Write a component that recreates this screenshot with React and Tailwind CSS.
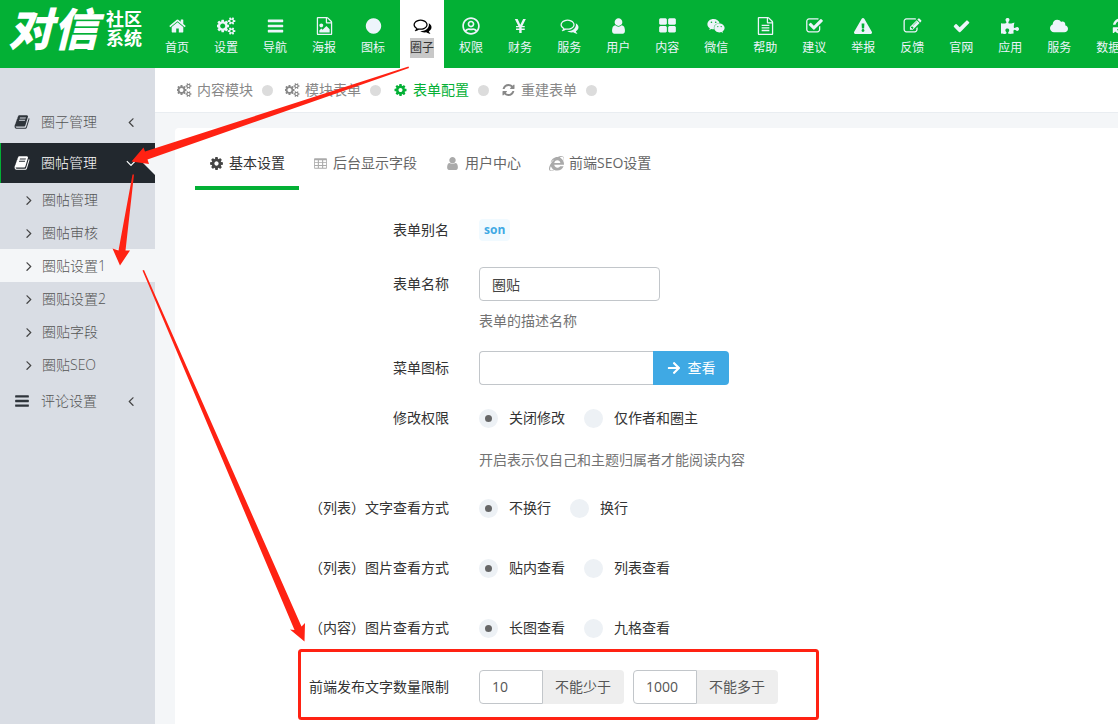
import React, { useState } from "react";
import {
  FaArrowRight,
  FaCloud,
  FaExclamationTriangle,
  FaInternetExplorer,
  FaPuzzlePiece,
  FaRegUserCircle,
  FaWeixin,
} from "react-icons/fa";

const PATHS = {
  home: "M1472 992v480q0 26-19 45t-45 19h-384v-384h-256v384h-384q-26 0-45-19t-19-45v-480q0-1 .5-3t.5-3l575-474 575 474q1 2 1 6zm223-69l-62 74q-8 9-21 11h-3q-13 0-21-7l-692-577-692 577q-12 8-24 7-13-2-21-11l-62-74q-8-10-7-23.5t11-21.5l719-599q32-26 76-26t76 26l244 204v-195q0-14 9-23t23-9h192q14 0 23 9t9 23v408l219 182q10 8 11 21.5t-7 23.5z",
  cog: "M1152 896q0-106-75-181t-181-75-181 75-75 181 75 181 181 75 181-75 75-181zm512-109v222q0 12-8 23t-20 13l-185 28q-19 54-39 91 35 50 107 138 10 12 10 25t-9 23q-27 37-99 108t-94 71q-12 0-26-9l-138-108q-44 23-91 38-16 136-29 186-7 28-36 28h-222q-14 0-24.5-8.5t-11.5-21.5l-28-184q-49-16-90-37l-141 107q-10 9-25 9-14 0-25-11-126-114-165-168-7-10-7-23 0-12 8-23 15-21 51-66.5t54-70.5q-27-50-41-99l-183-27q-13-2-21-12.5t-8-23.5v-222q0-12 8-23t19-13l186-28q14-46 39-92-40-57-107-138-10-12-10-24 0-10 9-23 26-36 98.5-107.5t94.5-71.5q13 0 26 10l138 107q44-23 91-38 16-136 29-186 7-28 36-28h222q14 0 24.5 8.5t11.5 21.5l28 184q49 16 90 37l142-107q9-9 24-9 13 0 25 10 129 119 165 170 7 8 7 22 0 12-8 23-15 21-51 66.5t-54 70.5q26 50 41 98l183 28q13 2 21 12.5t8 23.5z",
  cogs: "M832 896q0-106-75-181t-181-75-181 75-75 181 75 181 181 75 181-75 75-181zm768 512q0-52-38-90t-90-38-90 38-38 90q0 53 37.5 90.5t90.5 37.5 90.5-37.5 37.5-90.5zm0-1024q0-52-38-90t-90-38-90 38-38 90q0 53 37.5 90.5t90.5 37.5 90.5-37.5 37.5-90.5zm-384 421v185q0 10-7 19.5t-16 10.5l-155 24q-11 35-32 76 34 48 90 115 7 11 7 20 0 12-7 19-23 30-82.5 89.5t-78.5 59.5q-11 0-21-7l-115-90q-37 19-77 31-11 108-23 155-7 24-30 24h-186q-11 0-20-7.5t-10-17.5l-23-153q-34-10-75-31l-118 89q-7 7-20 7-11 0-21-8-144-133-144-160 0-9 7-19 10-14 41-53t47-61q-23-44-35-82l-152-24q-10-1-17-9.5t-7-19.5v-185q0-10 7-19.5t16-10.5l155-24q11-35 32-76-34-48-90-115-7-11-7-20 0-12 7-20 22-30 82-89t79-59q11 0 21 7l115 90q34-18 77-32 11-108 23-154 7-24 30-24h186q11 0 20 7.5t10 17.5l23 153q34 10 75 31l118-89q8-7 20-7 11 0 21 8 144 133 144 160 0 8-7 19-12 16-42 54t-45 60q23 48 34 82l152 23q10 2 17 10.5t7 19.5zm640 533v140q0 16-149 31-12 27-30 52 51 113 51 138 0 4-4 7-122 71-124 71-8 0-46-47t-52-68q-20 2-30 2t-30-2q-14 21-52 68t-46 47q-2 0-124-71-4-3-4-7 0-25 51-138-18-25-30-52-149-15-149-31v-140q0-16 149-31 13-29 30-52-51-113-51-138 0-4 4-7 4-2 35-20t59-34 30-16q8 0 46 46.5t52 67.5q20-2 30-2t30 2q51-71 92-112l6-2q4 0 124 70 4 3 4 7 0 25-51 138 17 23 30 52 149 15 149 31zm0-1024v140q0 16-149 31-12 27-30 52 51 113 51 138 0 4-4 7-122 71-124 71-8 0-46-47t-52-68q-20 2-30 2t-30-2q-14 21-52 68t-46 47q-2 0-124-71-4-3-4-7 0-25 51-138-18-25-30-52-149-15-149-31v-140q0-16 149-31 13-29 30-52-51-113-51-138 0-4 4-7 4-2 35-20t59-34 30-16q8 0 46 46.5t52 67.5q20-2 30-2t30 2q51-71 92-112l6-2q4 0 124 70 4 3 4 7 0 25-51 138 17 23 30 52 149 15 149 31z",
  bars: "M1664 1344v128q0 26-19 45t-45 19h-1408q-26 0-45-19t-19-45v-128q0-26 19-45t45-19h1408q26 0 45 19t19 45zm0-512v128q0 26-19 45t-45 19h-1408q-26 0-45-19t-19-45v-128q0-26 19-45t45-19h1408q26 0 45 19t19 45zm0-512v128q0 26-19 45t-45 19h-1408q-26 0-45-19t-19-45v-128q0-26 19-45t45-19h1408q26 0 45 19t19 45z",
  image: "M1596 380q28 28 48 76t20 88v1152q0 40-28 68t-68 28h-1344q-40 0-68-28t-28-68v-1600q0-40 28-68t68-28h896q40 0 88 20t76 48zm-444-244v376h376q-10-29-22-41l-313-313q-12-12-41-22zm384 1528v-1024h-416q-40 0-68-28t-28-68v-416h-768v1536h1280zm-128-448v320h-1024v-192l192-192 128 128 384-384zm-832-192q-80 0-136-56t-56-136 56-136 136-56 136 56 56 136-56 136-136 56z",
  file: "M1596 380q28 28 48 76t20 88v1152q0 40-28 68t-68 28h-1344q-40 0-68-28t-28-68v-1600q0-40 28-68t68-28h896q40 0 88 20t76 48zm-444-244v376h376q-10-29-22-41l-313-313q-12-12-41-22zm384 1528v-1024h-416q-40 0-68-28t-28-68v-416h-768v1536h1280zM512 768h768v128h-768zM512 1024h768v128h-768zM512 1280h768v128h-768z",
  circle: "M1664 896q0 209-103 385.5t-279.5 279.5-385.5 103-385.5-103-279.5-279.5-103-385.5 103-385.5 279.5-279.5 385.5-103 385.5 103 279.5 279.5 103 385.5z",
  comments: "M704 384q-153 0-286 52t-211.5 141-78.5 191q0 82 53 158t149 132l97 56-35 84q34-20 62-39l44-31 53 10q78 14 153 14 153 0 286-52t211.5-141 78.5-191-78.5-191-211.5-141-286-52zm0-128q191 0 353.5 68.5t256.5 186.5 94 257-94 257-256.5 186.5-353.5 68.5q-86 0-176-16-124 88-278 128-36 9-86 16h-3q-11 0-20.5-8t-11.5-21q-1-3-1-6.5t.5-6.5 2-6l2.5-5 3.5-5.5 4-5 4.5-5 4-4.5q5-6 23-25t26-29.5 22.5-29 25-38.5 20.5-44q-124-72-195-177t-71-224q0-139 94-257t256.5-186.5 353.5-68.5zm822 1169q10 24 20.5 44t25 38.5 22.5 29 26 29.5 23 25q1 1 4 4.5t4.5 5 4 5 3.5 5.5l2.5 5 2 6 .5 6.5-1 6.5q-3 14-13 22t-22 7q-50-7-86-16-154-40-278-128-90 16-176 16-271 0-472-132 58 4 88 4 161 0 309-45t264-129q125-92 192-212t67-254q0-77-23-152 129 71 204 178t75 230q0 120-71 224.5t-195 176.5z",
  yen: "M1010 1600h-240v-310h-320v-140h320v-120h-320v-140h230l-350-698h280l270 590 280-590h270l-350 698h240v140h-310v120h310v140h-310z",
  user: "M1536 1399q0 109-62.5 187t-150.5 78h-854q-88 0-150.5-78t-62.5-187q0-85 8.5-160.5t31.5-152 58.5-131 94-89 134.5-34.5q131 128 313 128t313-128q76 0 134.5 34.5t94 89 58.5 131 31.5 152 8.5 160.5zm-256-887q0 159-112.5 271.5t-271.5 112.5-271.5-112.5-112.5-271.5 112.5-271.5 271.5-112.5 271.5 112.5 112.5 271.5z",
  large: "M832 1024v384q0 52-38 90t-90 38h-512q-52 0-90-38t-38-90v-384q0-52 38-90t90-38h512q52 0 90 38t38 90zm0-768v384q0 52-38 90t-90 38h-512q-52 0-90-38t-38-90v-384q0-52 38-90t90-38h512q52 0 90 38t38 90zm896 768v384q0 52-38 90t-90 38h-512q-52 0-90-38t-38-90v-384q0-52 38-90t90-38h512q52 0 90 38t38 90zm0-768v384q0 52-38 90t-90 38h-512q-52 0-90-38t-38-90v-384q0-52 38-90t90-38h512q52 0 90 38t38 90z",
  checkSquare: "M1472 930v318q0 119-84.5 203.5t-203.5 84.5h-832q-119 0-203.5-84.5t-84.5-203.5v-832q0-119 84.5-203.5t203.5-84.5h832q63 0 117 25 15 7 18 23 3 17-9 29l-49 49q-10 10-23 10-3 0-9-2-23-6-45-6h-832q-66 0-113 47t-47 113v832q0 66 47 113t113 47h832q66 0 113-47t47-113v-254q0-13 9-22l64-64q10-10 23-10 6 0 12 3 20 8 20 29zm231-489l-814 814q-24 24-57 24t-57-24l-430-430q-24-24-24-57t24-57l110-110q24-24 57-24t57 24l263 263 647-647q24-24 57-24t57 24l110 110q24 24 24 57t-24 57z",
  pencil: "M888 1184l116-116-152-152-116 116v56h96v96h56zm440-720q-16-16-33 1l-350 350q-17 17-1 33t33-1l350-350q17-17 1-33zm80 594v190q0 119-84.5 203.5t-203.5 84.5h-832q-119 0-203.5-84.5t-84.5-203.5v-832q0-119 84.5-203.5t203.5-84.5h832q63 0 117 25 15 7 18 23 3 17-9 29l-49 49q-14 14-32 8-23-6-45-6h-832q-66 0-113 47t-47 113v832q0 66 47 113t113 47h832q66 0 113-47t47-113v-126q0-13 9-22l64-64q15-15 35-7t20 29zm-96-738l288 288-672 672h-288v-288zm444 132l-92 92-288-288 92-92q28-28 68-28t68 28l152 152q28 28 28 68t-28 68z",
  check: "M1671 566q0 40-28 68l-724 724-136 136q-28 28-68 28t-68-28l-136-136-362-362q-28-28-28-68t28-68l136-136q28-28 68-28t68 28l294 295 656-657q28-28 68-28t68 28l136 136q28 28 28 68z",
  refresh: "M1639 1056q0 5-1 7-64 268-268 434.5t-478 166.5q-146 0-282.5-55t-243.5-157l-129 129q-19 19-45 19t-45-19-19-45v-448q0-26 19-45t45-19h448q26 0 45 19t19 45-19 45l-137 137q71 66 161 102t187 36q134 0 250-65t186-179q11-17 53-117 8-23 30-23h192q13 0 22.5 9.5t9.5 22.5zm25-800v448q0 26-19 45t-45 19h-448q-26 0-45-19t-19-45 19-45l138-138q-148-137-349-137-134 0-250 65t-186 179q-11 17-53 117-8 23-30 23h-199q-13 0-22.5-9.5t-9.5-22.5v-7q65-268 270-434.5t480-166.5q146 0 284 55.5t245 156.5l130-129q19-19 45-19t45 19 19 45z",
  book: "M1703 478q40 57 18 129l-275 906q-19 64-76.5 107.5t-122.5 43.5h-923q-77 0-148.5-53.5t-99.5-131.5q-24-67-2-127 0-4 3-27t4-37q1-8-3-21.5t-3-19.5q2-11 8-21t16.5-23.5 16.5-23.5q23-38 45-91.5t30-91.5q3-10 .5-30t-.5-28q3-11 17-28t17-23q21-36 42-92t25-90q1-9-2.5-32t.5-28q4-13 22-30.5t22-22.5q19-26 42.5-84.5t27.5-96.5q1-8-3-25.5t-2-26.5q2-8 9-18t18-23 17-21q8-12 16.5-30.5t15-35 16-36 19.5-32 26.5-23.5 36-11.5 47.5 5.5l-1 3q38-9 51-9h761q74 0 114 56t18 130l-274 906q-36 119-71.5 153.5t-128.5 34.5h-869q-27 0-38 15-11 16-1 43 24 70 144 70h923q29 0 56-15.5t35-41.5l300-987q7-22 5-57 38 15 59 43zm-1064 2q-4 13 2 22.5t20 9.5h608q13 0 25.5-9.5t16.5-22.5l21-64q4-13-2-22.5t-20-9.5h-608q-13 0-25.5 9.5t-16.5 22.5zm-83 256q-4 13 2 22.5t20 9.5h608q13 0 25.5-9.5t16.5-22.5l21-64q4-13-2-22.5t-20-9.5h-608q-13 0-25.5 9.5t-16.5 22.5z",
  table: "M224 256h1344q96 0 96 96v1088q0 96-96 96h-1344q-96 0-96-96v-1088q0-96 96-96zM224 512v224h352v-224zM704 512v224h384v-224zM1216 512v224h352v-224zM224 848v224h352v-224zM704 848v224h384v-224zM1216 848v224h352v-224zM224 1184v224h352v-224zM704 1184v224h384v-224zM1216 1184v224h352v-224z",
  left: "M1203 544q0 13-10 23l-393 393 393 393q10 10 10 23t-10 23l-50 50q-10 10-23 10t-23-10l-466-466q-10-10-10-23t10-23l466-466q10-10 23-10t23 10l50 50q10 10 10 23z",
  right: "M1171 960q0 13-10 23l-466 466q-10 10-23 10t-23-10l-50-50q-10-10-10-23t10-23l393-393-393-393q-10-10-10-23t10-23l50-50q10-10 23-10t23 10l466 466q10 10 10 23z",
  down: "M1395 736q0 13-10 23l-466 466q-10 10-23 10t-23-10l-466-466q-10-10-10-23t10-23l50-50q10-10 23-10t23 10l393 393 393-393q10-10 23-10t23 10l50 50q10 10 10 23z",
};

const Icon = ({ name, className }) => (
  <svg
    viewBox={name === "cogs" ? "0 0 1920 1792" : "0 0 1792 1792"}
    fill="currentColor"
    fillRule={name === "table" ? "evenodd" : "nonzero"}
    className={className}
    aria-hidden="true"
  >
    <path d={PATHS[name]} />
  </svg>
);

const NAV = [
  { label: "首页", icon: "home" },
  { label: "设置", icon: "cogs" },
  { label: "导航", icon: "bars" },
  { label: "海报", icon: "image" },
  { label: "图标", icon: "circle" },
  { label: "圈子", icon: "comments", active: true },
  { label: "权限", Glyph: FaRegUserCircle },
  { label: "财务", icon: "yen" },
  { label: "服务", icon: "comments" },
  { label: "用户", icon: "user" },
  { label: "内容", icon: "large" },
  { label: "微信", Glyph: FaWeixin },
  { label: "帮助", icon: "file" },
  { label: "建议", icon: "checkSquare" },
  { label: "举报", Glyph: FaExclamationTriangle },
  { label: "反馈", icon: "pencil" },
  { label: "官网", icon: "check" },
  { label: "应用", Glyph: FaPuzzlePiece },
  { label: "服务", Glyph: FaCloud },
  { label: "数据更新", icon: "refresh" },
];

const SUB_MENU = [
  "圈帖管理",
  "圈帖审核",
  "圈贴设置1",
  "圈贴设置2",
  "圈贴字段",
  "圈贴SEO",
];

const CRUMBS = [
  { label: "内容模块", icon: "cogs" },
  { label: "模块表单", icon: "cogs" },
  { label: "表单配置", icon: "cog", active: true },
  { label: "重建表单", icon: "refresh" },
];

const TABS = [
  { label: "基本设置", icon: "cog" },
  { label: "后台显示字段", icon: "table" },
  { label: "用户中心", icon: "user" },
  { label: "前端SEO设置", Glyph: FaInternetExplorer },
];

const Header = () => (
  <header className="flex h-[68px] overflow-hidden bg-[#03b035] text-[#edf4fb]">
    <a
      href="#home"
      className="flex w-[155px] shrink-0 items-center gap-2 pb-[10px] pl-2 text-white"
    >
      <span className="text-[45px] leading-[46px] font-black italic">对信</span>
      <span className="w-10 text-[18px] leading-[19px] font-bold">社区系统</span>
    </a>
    <nav className="flex gap-[5px]">
      {NAV.map(({ label, icon, Glyph, active }, i) => (
        <a
          key={i}
          href="#nav"
          className={`flex shrink-0 flex-col items-center px-[10px] pt-[17px] ${
            active ? "bg-white text-black" : ""
          }`}
        >
          {Glyph ? (
            <Glyph className="size-[18px]" />
          ) : (
            <Icon name={icon} className="h-[18px] w-[19px]" />
          )}
          <span
            className={`mt-[3px] text-xs leading-5 whitespace-nowrap ${
              active ? "bg-[#c8c8c8] text-[#333]" : ""
            }`}
          >
            {label}
          </span>
        </a>
      ))}
    </nav>
  </header>
);

const Sidebar = () => (
  <aside className="w-[155px] shrink-0 bg-[#d9dde4] pt-[34px] font-light text-[#555]">
    <a href="#circle" className="flex h-10 items-center pr-4 pl-[14px]">
      <Icon name="book" className="size-4 text-[#2f353b]" />
      <span className="ml-[11px] flex-1">圈子管理</span>
      <Icon name="left" className="size-4 text-[#444]" />
    </a>

    <a
      href="#posts"
      className="relative mt-px flex h-10 items-center border-l border-[#03b035] bg-[#22282e] pr-4 pl-[13px] text-white"
    >
      <Icon name="book" className="size-4" />
      <span className="ml-[11px] flex-1">圈帖管理</span>
      <Icon name="down" className="size-4" />
      <svg
        viewBox="0 0 12 24"
        className="absolute top-2 right-0 h-6 w-3"
        aria-hidden="true"
      >
        <path d="M12 0v24L0 12z" fill="#f4f6f8" />
      </svg>
    </a>

    <ul>
      {SUB_MENU.map((label) => (
        <li key={label}>
          <a
            href="#sub"
            className={`flex h-[33px] items-center pl-[21px] ${
              label === "圈贴设置1" ? "bg-[#f4f6f8]" : ""
            }`}
          >
            <Icon name="right" className="size-4 text-[#444]" />
            <span className="ml-[5px]">{label}</span>
          </a>
        </li>
      ))}
    </ul>

    <a href="#comments" className="flex h-10 items-center pr-4 pl-[14px]">
      <Icon name="bars" className="size-4 text-[#2f353b]" />
      <span className="ml-[11px] flex-1">评论设置</span>
      <Icon name="left" className="size-4 text-[#444]" />
    </a>
  </aside>
);

const Row = ({ label, htmlFor, help, helpClass = "mt-[10px]", height = "h-[34px]", children }) => (
  <div className="flex gap-[30px]">
    <label
      htmlFor={htmlFor}
      className={`flex w-[254px] shrink-0 items-center justify-end text-[#333] ${height}`}
    >
      {label}
    </label>
    <div>
      <div className={`flex items-center ${height}`}>{children}</div>
      {help && <p className={`leading-5 text-[#737373] ${helpClass}`}>{help}</p>}
    </div>
  </div>
);

const Radios = ({ name, options }) => {
  const [value, setValue] = useState(options[0]);

  return (
    <div className="flex gap-[19px]">
      {options.map((option) => (
        <label key={option} className="flex items-center gap-[11px] text-[#333]">
          <input
            type="radio"
            name={name}
            checked={value === option}
            onChange={() => setValue(option)}
            className="size-[19px] appearance-none rounded-full border-[6px] border-[#edf1f5] bg-[#edf1f5] checked:bg-[#666]"
          />
          {option}
        </label>
      ))}
    </div>
  );
};

const Limit = ({ id, value, unit }) => (
  <div className="flex h-[34px]">
    <input
      id={id}
      aria-label={unit}
      defaultValue={value}
      className="w-16 rounded-l border border-[#c2c6ca] px-3 text-[#555]"
    />
    <span className="flex w-[81px] items-center rounded-r bg-[#eee] pl-3 text-[#555]">
      {unit}
    </span>
  </div>
);

const SettingsForm = () => (
  <form className="pt-[23px] pb-10">
    <div className="flex flex-col gap-5">
      <Row label="表单别名">
        <span className="rounded-sm bg-[#f1faff] px-[5px] text-xs leading-[22px] font-bold text-[#3fa9e4]">
          son
        </span>
      </Row>

      <Row label="表单名称" htmlFor="form-name" help="表单的描述名称">
        <input
          id="form-name"
          defaultValue="圈贴"
          className="h-[34px] w-[181px] rounded border border-[#c2c6ca] px-3 text-[#444]"
        />
      </Row>

      <Row label="菜单图标" htmlFor="menu-icon">
        <input
          id="menu-icon"
          className="h-[34px] w-[174px] rounded-l border border-r-0 border-[#c2c6ca] px-3"
        />
        <button
          type="button"
          className="flex h-[34px] w-[76px] items-center justify-center gap-[7px] rounded-r bg-[#3fa9e4] text-white"
        >
          <FaArrowRight className="size-[14px]" />
          查看
        </button>
      </Row>

      <Row
        label="修改权限"
        height="h-[26px]"
        help="开启表示仅自己和主题归属者才能阅读内容"
        helpClass="mt-[19px]"
      >
        <Radios name="edit" options={["关闭修改", "仅作者和圈主"]} />
      </Row>
    </div>

    <div className="mt-5 flex flex-col gap-6">
      <Row label="（列表）文字查看方式" height="h-9">
        <Radios name="list-text" options={["不换行", "换行"]} />
      </Row>
      <Row label="（列表）图片查看方式" height="h-9">
        <Radios name="list-image" options={["贴内查看", "列表查看"]} />
      </Row>
      <Row label="（内容）图片查看方式" height="h-9">
        <Radios name="content-image" options={["长图查看", "九格查看"]} />
      </Row>
      <Row label="前端发布文字数量限制" htmlFor="min-words">
        <div className="flex gap-[9px]">
          <Limit id="min-words" value="10" unit="不能少于" />
          <Limit id="max-words" value="1000" unit="不能多于" />
        </div>
      </Row>
    </div>
  </form>
);

// Red guide arrows and frame drawn over the page
const Annotations = () => (
  <svg
    width="1118"
    height="724"
    viewBox="0 0 1118 724"
    fill="#ff2213"
    className="pointer-events-none absolute top-0 left-0"
    aria-hidden="true"
  >
    <path d="M408.500 66.500L145 151.500L143.500 147.500L131.500 161.500L149 164L147.500 159.500L409 68z" />
    <path d="M132.500 174.500L118.500 250.500L112.500 248.500L120 265.500L130 250.500L125.500 250.500L134 174.500z" />
    <path d="M142.500 270.500L294.500 630L290 629.500L304.500 641.500L305 623L301.500 626.500L144 270z" />
    <rect x="299.500" y="650.500" width="518" height="68" rx="2" fill="none" stroke="#ff2213" strokeWidth="3" />
  </svg>
);

const App = () => {
  return (
    <div className="relative h-screen overflow-hidden font-['Open_Sans','Noto_Sans_CJK_SC',sans-serif] text-sm">
      <Header />

      <div className="flex min-h-full">
        <Sidebar />

        <main className="min-w-0 flex-1 bg-[#f4f6f8]">
          {/* Module links */}
          <div className="flex h-[45px] items-center border-b border-[#e9edf1] bg-white pl-[22px] text-[#888]">
            {CRUMBS.map(({ label, icon, active }) => (
              <div key={label} className="flex items-center">
                <a
                  href="#crumb"
                  className={`flex items-center gap-[5px] ${active ? "text-[#03b035]" : ""}`}
                >
                  <Icon name={icon} className="h-[14px] w-[15px]" />
                  {label}
                </a>
                <span className="mr-3 ml-[9px] size-[11px] rounded-full bg-[#dcdcdc]" />
              </div>
            ))}
          </div>

          <section className="mt-[15px] ml-5 rounded-tl bg-white px-5">
            <div className="flex h-[62px]">
              {TABS.map(({ label, icon, Glyph }, i) => (
                <button
                  key={label}
                  type="button"
                  className={`flex items-center border-b-4 px-[14px] pt-3 ${
                    i === 0
                      ? "border-[#03b035] text-[#333]"
                      : "border-transparent text-[#666]"
                  }`}
                >
                  <span className={`mr-[5px] ${i === 0 ? "text-[#444]" : "text-[#aaa]"}`}>
                    {Glyph ? (
                      <Glyph className="size-[15px]" />
                    ) : (
                      <Icon name={icon} className="size-[15px]" />
                    )}
                  </span>
                  {label}
                </button>
              ))}
            </div>

            <SettingsForm />
          </section>
        </main>
      </div>

      <Annotations />
    </div>
  );
};

export default App;
